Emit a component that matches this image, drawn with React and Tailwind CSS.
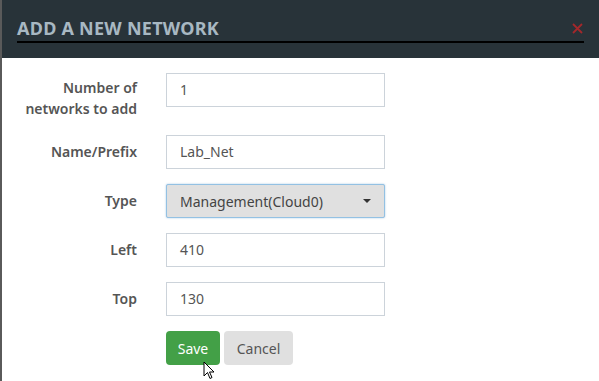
import React from "react";

const font = { fontFamily: '"Noto Sans", "Open Sans", sans-serif' };

function Field({ label, children, tall }) {
  return (
    <div className="flex items-start">
      <label
        className={`w-[135px] shrink-0 text-right text-[14px] font-semibold text-[#555] ${
          tall ? "pt-[4px] pb-[1px] leading-[21px]" : "leading-[33px]"
        }`}
      >
        {label}
      </label>
      <div className="ml-[29px] w-[219px]">{children}</div>
    </div>
  );
}

function TextInput({ value }) {
  return (
    <div className="h-[34px] border border-[#ccd3da] bg-white px-[13px] text-[14px] leading-[32px] text-[#555]">
      {value}
    </div>
  );
}

export default function App() {
  return (
    <div className="relative h-[381px] w-[599px] overflow-hidden border-l-2 border-[#5a5a5a] bg-white" style={font}>
      {/* Header */}
      <div className="h-[58px] bg-[#283339] pl-[15px] pr-[15px] pt-[17px]">
        <div className="flex items-center justify-between border-b-2 border-black pb-[2px]">
          <h1 className="text-[18px] font-bold leading-[22px] tracking-[0.25px] text-[#a8b8c2]">
            ADD A NEW NETWORK
          </h1>
          <svg className="mr-[1px]" width="11" height="11" viewBox="0 0 11 11">
            <path d="M1 1 L10 10 M10 1 L1 10" stroke="#a3282b" strokeWidth="1.8" />
          </svg>
        </div>
      </div>

      {/* Form */}
      <div className="flex flex-col gap-[15px] pt-[15px]">
        <Field label={<>Number of<br />networks to add</>} tall>
          <TextInput value="1" />
        </Field>
        <Field label="Name/Prefix">
          <TextInput value="Lab_Net" />
        </Field>
        <Field label="Type">
          <div className="flex h-[34px] items-center justify-between rounded-[2px] border border-[#93c1e3] bg-[#e0e0e0] pl-[13px] pr-[13px] text-[14px] text-[#444] shadow-[0_0_2px_rgba(100,160,210,0.6)]">
            <span>Management(Cloud0)</span>
            <span className="h-0 w-0 border-x-[4px] border-t-[4px] border-x-transparent border-t-[#333]" />
          </div>
        </Field>
        <Field label="Left">
          <TextInput value="410" />
        </Field>
        <Field label="Top">
          <TextInput value="130" />
        </Field>
        <div className="flex gap-[4px] pl-[164px]">
          <button className="h-[34px] w-[54px] rounded-[4px] bg-[#43a047] text-[14px] text-white">Save</button>
          <button className="h-[34px] w-[69px] rounded-[4px] bg-[#e0e0e0] text-[14px] text-[#555]">Cancel</button>
        </div>
      </div>

      {/* Mouse cursor */}
      <svg className="absolute left-[201px] top-[361px]" width="14" height="20" viewBox="0 0 14 20">
        <path d="M1 1 L1 15 L4.5 11.5 L7 17.5 L9 16.5 L6.5 11 L11 11 Z" fill="#fff" stroke="#000" strokeWidth="1" />
      </svg>
    </div>
  );
}
